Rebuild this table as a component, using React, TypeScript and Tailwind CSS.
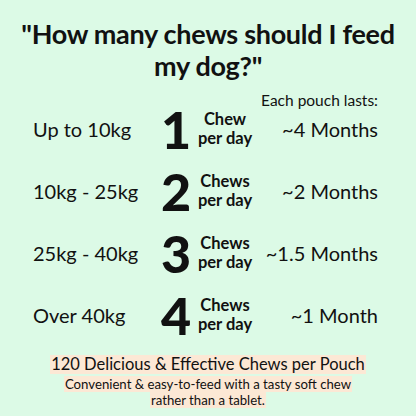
const rows = [
  { weight: 'Up to 10kg', count: '1', unit: 'Chew', lasts: '~4 Months' },
  { weight: '10kg - 25kg', count: '2', unit: 'Chews', lasts: '~2 Months' },
  { weight: '25kg - 40kg', count: '3', unit: 'Chews', lasts: '~1.5 Months' },
  { weight: 'Over 40kg', count: '4', unit: 'Chews', lasts: '~1 Month' },
];

const App = () => {
  return (
    <div className="w-[416px] h-[416px] bg-[#dcfae6] text-[#111] flex flex-col items-center font-['Lato',sans-serif] overflow-hidden">
      {/* Heading */}
      <h1 className="mt-[18px] text-[27px] leading-[32px] font-bold text-center tracking-[-0.3px] w-[396px]">
        "How many chews should I feed my dog?"
      </h1>

      <div className="w-full pr-[38px] flex justify-end mt-[9px]">
        <span className="text-[15.5px] leading-[18px]">Each pouch lasts:</span>
      </div>

      {/* Rows */}
      <div className="w-full flex flex-col gap-[16px] mt-[-3px] pl-[33px] pr-[38px]">
        {rows.map((r) => (
          <div key={r.count} className="flex items-center h-[46px]">
            <span className="w-[126px] text-[20px] whitespace-nowrap">{r.weight}</span>
            <span className="w-[34px] text-[52px] leading-none font-black text-center">{r.count}</span>
            <div className="w-[62px] flex flex-col items-center text-[16.5px] leading-[19px] font-bold ml-[1px]">
              <span>{r.unit}</span>
              <span>per day</span>
            </div>
            <span className="flex-1 text-right text-[20px] whitespace-nowrap">{r.lasts}</span>
          </div>
        ))}
      </div>

      {/* Footer */}
      <div className="mt-[17px] flex flex-col items-center text-center">
        <span className="bg-[#fce8d5] text-[16.5px] leading-[19px] px-[1px]">
          120 Delicious &amp; Effective Chews per Pouch
        </span>
        <p className="mt-[2px] w-[300px] text-[13.2px] leading-[16px]">
          <span className="bg-[#fce8d5] box-decoration-clone px-[1px]">
            Convenient &amp; easy-to-feed with a tasty soft chew rather than a tablet.
          </span>
        </p>
      </div>
    </div>
  );
};

export default App;
